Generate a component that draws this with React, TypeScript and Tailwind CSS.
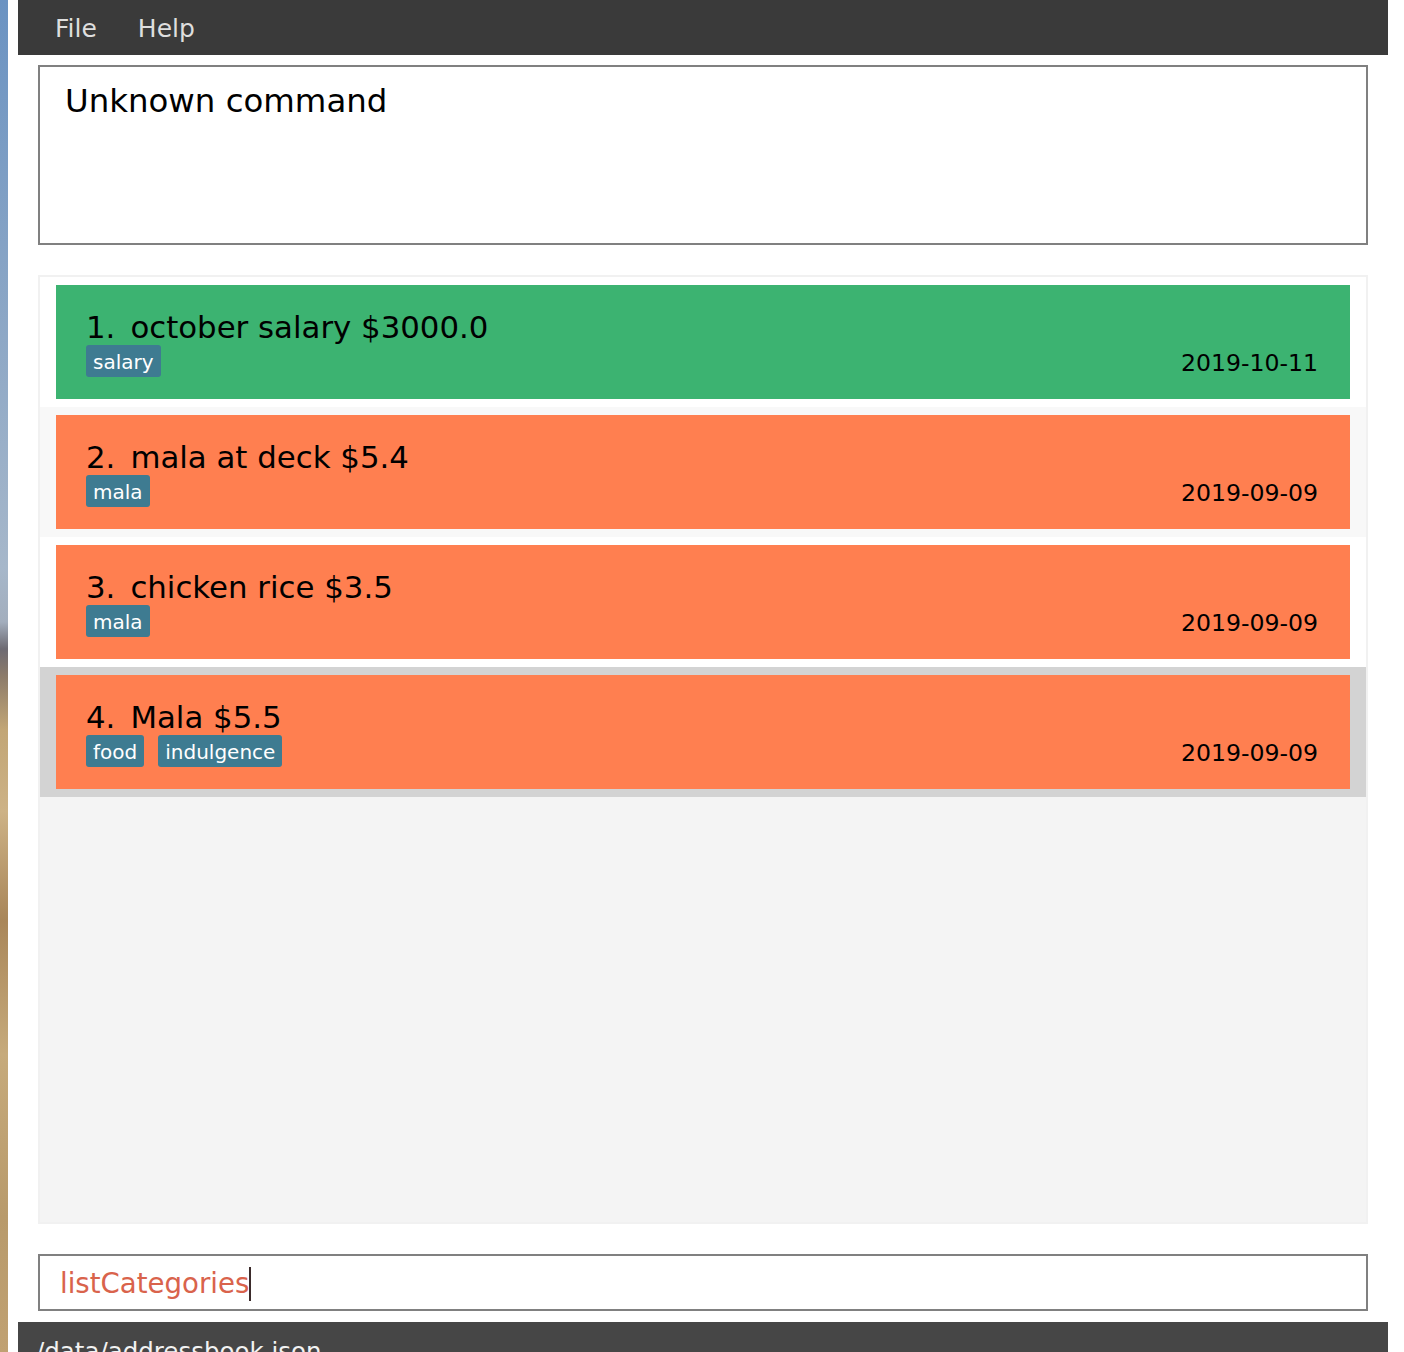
import React from 'react'

type Expense = {
  id: number
  name: string
  tags: string[]
  date: string
  income?: boolean
}

const expenses: Expense[] = [
  { id: 1, name: 'october salary $3000.0', tags: ['salary'], date: '2019-10-11', income: true },
  { id: 2, name: 'mala at deck $5.4', tags: ['mala'], date: '2019-09-09' },
  { id: 3, name: 'chicken rice $3.5', tags: ['mala'], date: '2019-09-09' },
  { id: 4, name: 'Mala $5.5', tags: ['food', 'indulgence'], date: '2019-09-09' },
]

const rowBg = ['bg-white', 'bg-[#f8f8f8]', 'bg-white', 'bg-[#d3d3d3]']

const Card = ({ item }: { item: Expense }) => {
  return (
    <div
      className={
        'flex h-[114px] flex-col pl-[30px] pr-[32px] pt-[24px] text-black ' +
        (item.income ? 'bg-[#3cb371]' : 'bg-[#ff7f50]')
      }
    >
      <div className='flex text-[30.8px] leading-[36px]'>
        <span>{item.id}.</span>
        <span className='ml-[15px]'>{item.name}</span>
      </div>
      <div className='flex items-baseline justify-between'>
        <div className='flex gap-[14px]'>
          {item.tags.map((t) => (
            <span
              key={t}
              className='h-[32px] rounded-[3px] bg-[#3e7b91] px-[7px] pt-[1px] text-[20px] leading-[32px] text-white'
            >
              {t}
            </span>
          ))}
        </div>
        <span className='translate-y-[2px] text-[23.6px] leading-[28px]'>{item.date}</span>
      </div>
    </div>
  )
}

const App = () => {
  return (
    <div className="flex h-[1352px] w-[1404px] overflow-hidden bg-white font-['DejaVu_Sans',sans-serif]">
      {/* desktop peeking out on the left */}
      <div className='w-[8px] shrink-0 bg-[linear-gradient(180deg,#6b93c2_0%,#8ea8c6_25%,#a6b7ca_42%,#a3aebd_46%,#6d6a72_48%,#8c7b6a_50%,#c2a676_54%,#cdb286_60%,#a98659_68%,#c6aa7b_78%,#b89a6b_90%,#c0a172_100%)]' />

      <div className='flex flex-1 flex-col'>
        {/* menu bar */}
        <div className='ml-[10px] flex h-[55px] w-[1370px] shrink-0 items-center gap-[41px] bg-[#3a3a3a] pl-[37px] pt-[2px] text-[25px] leading-[28px] text-[#dedede]'>
          <span>File</span>
          <span>Help</span>
        </div>

        {/* result display */}
        <div className='ml-[30px] mt-[10px] h-[180px] w-[1330px] shrink-0 border-2 border-[#808080] pl-[25px] pt-[15px] text-[32.4px] leading-[38px] text-black'>
          Unknown command
        </div>

        {/* expense list */}
        <div className='ml-[30px] mt-[30px] h-[949px] w-[1330px] shrink-0 border-2 border-[#f1f1f1] bg-[#f4f4f4]'>
          {expenses.map((e, i) => (
            <div key={e.id} className={'px-[16px] py-[8px] ' + rowBg[i]}>
              <Card item={e} />
            </div>
          ))}
        </div>

        {/* command box */}
        <div className='ml-[30px] mt-[30px] flex h-[57px] w-[1330px] shrink-0 items-center border-2 border-[#808080] pl-[20px] pt-[2px]'>
          <span className='text-[27.6px] leading-[32px] text-[#d9634c]'>listCategories</span>
          <span className='h-[34px] w-[2px] bg-[#3b2b2b]' />
        </div>

        {/* status bar */}
        <div className='ml-[10px] mt-[11px] w-[1370px] flex-1 bg-[#464646] pl-[18px] pt-[15px] text-[24.5px] leading-[29px] text-[#f2f2f2]'>
          /data/addressbook.json
        </div>
      </div>
    </div>
  )
}

export default App
